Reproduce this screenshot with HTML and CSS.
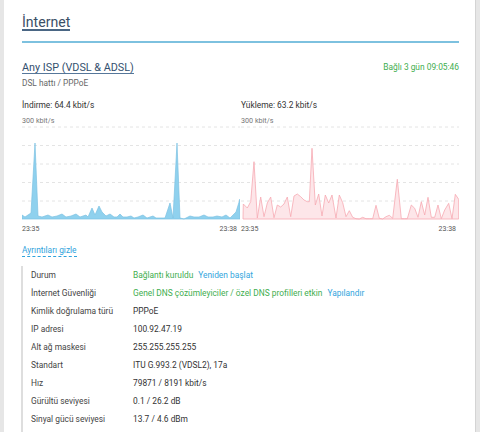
FILE: index.html
```html
<!DOCTYPE html>
<html lang="tr">
<head>
<meta charset="utf-8">
<title>İnternet</title>
<link rel="stylesheet" href="styles.css">
</head>
<body>
<div class="panel">
  <div class="title-bar"><h1 class="title">İnternet</h1></div>

  <div class="isp-row">
    <span class="isp-name">Any ISP (VDSL &amp; ADSL)</span>
    <span class="connected">Bağlı 3 gün 09:05:46</span>
  </div>
  <div class="isp-sub">DSL hattı / PPPoE</div>

  <div class="charts">
    <div class="chart">
      <div class="chart-title">İndirme: 64.4 kbit/s</div>
      <div class="chart-max">300 kbit/s</div>
      <svg class="chart-svg" width="218" height="94" viewBox="22 126 218 94" preserveAspectRatio="none">
        <g class="grid">
          <line x1="22" y1="127" x2="240" y2="127"/>
          <line x1="22" y1="145.5" x2="240" y2="145.5"/>
          <line x1="22" y1="164" x2="240" y2="164"/>
          <line x1="22" y1="182.5" x2="240" y2="182.5"/>
          <line x1="22" y1="201" x2="240" y2="201"/>
        </g>
        <polygon class="down" points="22,219 22,215 25,217 31,213 35,143 38,216 42,217 48,215 52,217 57,216 62,214 66,217 71,216 76,214 80,217 86,215 88,217 92,208 95,215 99,206 102,212 106,216 110,214 114,217 117,217 120,214 123,217 127,217 131,216 134,218 138,217 143,215 147,218 153,216 156,218 165,218 170,203 173,218 177,143 180,218 184,219 190,216 194,217 199,217 204,215 208,217 213,217 217,216 222,217 226,215 230,218 236,212 240,199 240,219"/>
      </svg>
      <div class="chart-times"><span>23:35</span><span>23:38</span></div>
    </div>
    <div class="chart">
      <div class="chart-title">Yükleme: 63.2 kbit/s</div>
      <div class="chart-max">300 kbit/s</div>
      <svg class="chart-svg" width="218" height="94" viewBox="241 126 218 94" preserveAspectRatio="none">
        <g class="grid">
          <line x1="241" y1="127" x2="459" y2="127"/>
          <line x1="241" y1="145.5" x2="459" y2="145.5"/>
          <line x1="241" y1="164" x2="459" y2="164"/>
          <line x1="241" y1="182.5" x2="459" y2="182.5"/>
          <line x1="241" y1="201" x2="459" y2="201"/>
        </g>
        <polygon class="up" points="243,219 243.3,204 247.3,208 250.7,201.7 254,161.7 257.3,218 260.7,197 264,216.7 267.3,203 270.7,197 274,217.7 277.3,205 280.7,207 284,204 287.3,197 290.7,216.7 294,196 297.3,194 300.7,196.7 304,200 307.3,201.7 309.3,201.7 312,148.3 315.3,205 318.7,194 322,216 325.3,195 328.7,203 332,195 336,218 339.3,195 342.7,202.7 346,216.7 349.3,210.7 352.7,217.3 356,218.7 359.3,219 362.7,217.3 366,218.7 369.3,218.7 372.7,218.7 376,205.3 379.3,218.3 382.7,219 386,216.7 389.3,215.3 392.7,218.3 397.3,179.3 401.3,218.7 404.7,218.7 407.3,218.7 411.3,205 414.7,208.3 418,217.3 421.3,201.7 424.7,215 428,197.3 431.3,217.3 434.7,217.3 438,205 441.3,218.7 444.7,210 448.7,203.3 452,218.7 455.3,194.3 458.7,199.3 458.7,219"/>
      </svg>
      <div class="chart-times"><span>23:35</span><span>23:38</span></div>
    </div>
  </div>

  <div class="toggle-wrap"><a class="toggle" href="#">Ayrıntıları gizle</a></div>

  <div class="details">
    <div class="row"><span class="label">Durum</span><span class="value"><span class="ok">Bağlantı kuruldu</span><a class="link" href="#">Yeniden başlat</a></span></div>
    <div class="row"><span class="label">İnternet Güvenliği</span><span class="value"><span class="ok">Genel DNS çözümleyiciler / özel DNS profilleri etkin</span><a class="link" href="#">Yapılandır</a></span></div>
    <div class="row"><span class="label">Kimlik doğrulama türü</span><span class="value">PPPoE</span></div>
    <div class="row"><span class="label">IP adresi</span><span class="value">100.92.47.19</span></div>
    <div class="row"><span class="label">Alt ağ maskesi</span><span class="value">255.255.255.255</span></div>
    <div class="row"><span class="label">Standart</span><span class="value">ITU G.993.2 (VDSL2), 17a</span></div>
    <div class="row"><span class="label">Hız</span><span class="value">79871 / 8191 kbit/s</span></div>
    <div class="row"><span class="label">Gürültü seviyesi</span><span class="value">0.1 / 26.2 dB</span></div>
    <div class="row"><span class="label">Sinyal gücü seviyesi</span><span class="value">13.7 / 4.6 dBm</span></div>
    <div class="row"><span class="label">Sinyal zayıflaması</span><span class="value">1.6 / 9.6 dB</span></div>
  </div>
</div>
</body>
</html>
```
FILE: styles.css
```css
html, body {
  margin: 0;
  padding: 0;
}
body {
  background: #e6e6e6;
  font-family: Roboto, "Liberation Sans", sans-serif;
  color: #333;
  height: 432px;
  overflow: hidden;
}
.panel {
  margin-left: 4px;
  width: 472px;
  min-height: 432px;
  background: #fff;
  border-right: 1px solid #d4d4d4;
  box-sizing: border-box;
  padding: 16px 16px 0 18px;
}
.title-bar {
  display: flex;
  border-bottom: 2px solid #7dc1df;
  padding-bottom: 9.5px;
}
.title {
  margin: 0;
  font-size: 14.1px;
  font-weight: 400;
  line-height: 13px;
  color: #3b4f66;
  border-bottom: 2px solid #4a6684;
}
.isp-row {
  display: flex;
  justify-content: space-between;
  align-items: center;
  margin-top: 19px;
}
.isp-name {
  font-size: 10.8px;
  line-height: 11px;
  color: #33506e;
  border-bottom: 1.5px solid #56779a;
}
.connected {
  font-size: 8.4px;
  line-height: 10px;
  color: #3fae4f;
  margin-top: -1px;
}
.isp-sub {
  font-size: 8.3px;
  line-height: 10px;
  color: #666;
  margin-top: 4px;
}
.charts {
  display: grid;
  grid-template-columns: 218px 218px;
  column-gap: 1px;
  margin-top: 11px;
}
.chart-title {
  font-size: 8.4px;
  line-height: 12px;
  color: #333;
}
.chart-max {
  font-size: 7.2px;
  line-height: 8px;
  color: #777;
  margin-top: 6.5px;
}
.chart-svg {
  display: block;
  margin-top: 0.5px;
}
.grid line {
  stroke: #e4e4e4;
  stroke-width: 1;
  stroke-dasharray: 3 3;
}
.down {
  fill: #8fd1ee;
  stroke: #7cc2e3;
  stroke-width: 0.7;
}
.up {
  fill: #fde6e9;
  stroke: #f6a9b3;
  stroke-width: 0.8;
}
.chart-times {
  display: flex;
  justify-content: space-between;
  font-size: 7px;
  line-height: 9px;
  color: #555;
  padding-right: 3px;
  margin-top: 5.5px;
}
.toggle-wrap {
  display: flex;
  margin-top: 11.3px;
}
.toggle {
  font-size: 8.4px;
  line-height: 11px;
  color: #2fa2dc;
  text-decoration: none;
  border-bottom: 1px dashed #2fa2dc;
}
.details {
  margin-top: 9.2px;
  margin-left: -1px;
  border-left: 2px solid #dedede;
  padding-left: 8px;
}
.row {
  display: flex;
  height: 18px;
  align-items: center;
  font-size: 8.4px;
  color: #444;
  white-space: nowrap;
}
.label {
  width: 102px;
  flex: none;
}
.value {
  display: flex;
  gap: 5px;
  color: #333;
}
.ok {
  color: #3fae4f;
}
.link {
  color: #33a5dd;
  text-decoration: none;
}
```
